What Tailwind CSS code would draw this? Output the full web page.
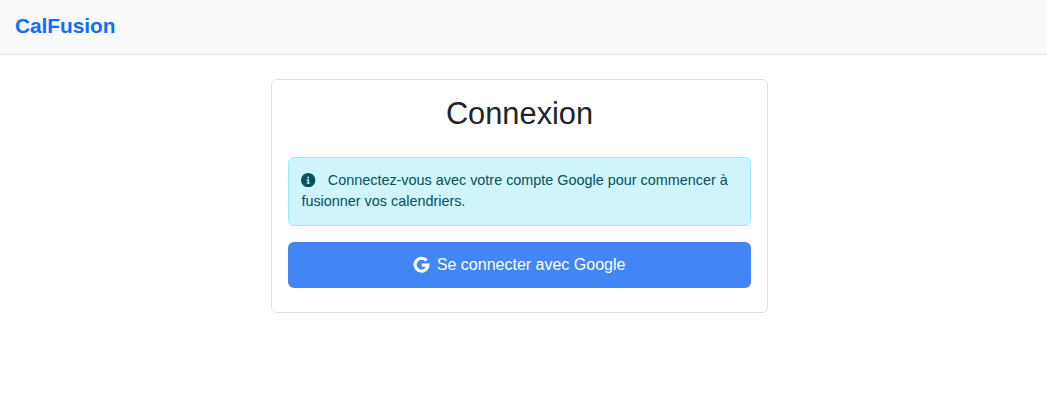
<!DOCTYPE html>
<html lang="fr">
<head>
<meta charset="utf-8">
<title>CalFusion</title>
<script src="https://cdn.jsdelivr.net/npm/@tailwindcss/browser@4"></script>
</head>
<body class="bg-white text-[#212529] font-['Liberation_Sans',Arial,sans-serif]">
<header class="h-[55px] border-b border-[#dee2e6] bg-[#f8f9fa] px-[15px] pt-[10px]">
  <a class="block text-[20.8px] leading-[31px] font-bold text-[#0d6efd]">CalFusion</a>
</header>
<main class="ml-[271px] mt-6 w-[497px]">
  <section class="h-[234px] rounded-md border border-[#dfdfdf] px-4 pt-[15px]">
    <h1 class="text-center text-[30.8px] leading-[38px] font-normal">Connexion</h1>
    <div class="mt-6 h-[69px] rounded-md border border-[#9eeaf9] bg-[#cff4fc] pr-3 pl-[12.4px] pt-3 text-[14.4px] leading-[21px] text-[#055160]">
      <svg class="mr-2 -mt-px inline-block size-[14.4px] align-[-2px]" viewBox="0 0 512 512" fill="currentColor"><path d="M256 512A256 256 0 1 0 256 0a256 256 0 1 0 0 512zM216 336h24V272H216c-13.3 0-24-10.7-24-24s10.7-24 24-24h48c13.3 0 24 10.7 24 24v88h8c13.3 0 24 10.7 24 24s-10.7 24-24 24H216c-13.3 0-24-10.7-24-24s10.7-24 24-24zm40-208a32 32 0 1 1 0 64 32 32 0 1 1 0-64z"/></svg>
      Connectez-vous avec votre compte Google pour commencer à fusionner vos calendriers.
    </div>
    <button class="mt-4 flex h-[46px] w-full items-center justify-center gap-2 rounded-md bg-[#4285f4] text-[16px] leading-6 text-white">
      <svg class="h-4 w-[15.25px] overflow-visible" viewBox="0.4 0 15.25 16" fill="none" stroke="currentColor" stroke-width="3.2"><path d="M12.9 3.6A6.4 6.4 0 1 0 14.3 8.2H8.2"/></svg>
      <span>Se connecter avec Google</span>
    </button>
  </section>
</main>
</body>
</html>
